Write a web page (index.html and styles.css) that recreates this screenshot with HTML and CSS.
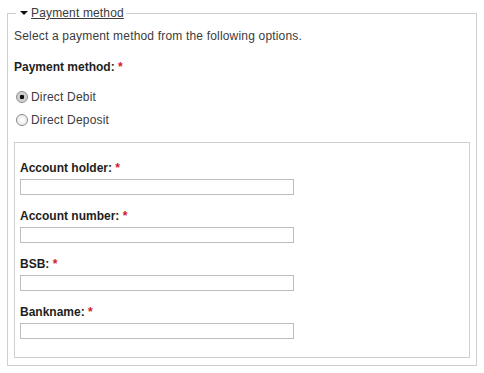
FILE: index.html
```html
<!DOCTYPE html>
<html lang="en">
<head>
<meta charset="UTF-8">
<meta name="viewport" content="width=device-width, initial-scale=1.0">
<title>Payment method</title>
<link rel="stylesheet" href="styles.css">
</head>
<body>

<form class="checkout">
    <fieldset class="pane">
        <legend><a href="#" class="pane-toggle"><span class="arrow"></span>Payment method</a></legend>
        <p class="pane-desc">Select a payment method from the following options.</p>

        <div class="form-item">
            <label class="field-label">Payment method: <span class="required">*</span></label>
            <div class="radios">
                <label class="radio"><input type="radio" name="method" value="debit" checked> Direct Debit</label>
                <label class="radio"><input type="radio" name="method" value="deposit"> Direct Deposit</label>
            </div>
        </div>

        <fieldset class="details">
            <div class="input-group">
                <label for="holder" class="field-label">Account holder: <span class="required">*</span></label>
                <input type="text" id="holder" name="holder">
            </div>
            <div class="input-group">
                <label for="number" class="field-label">Account number: <span class="required">*</span></label>
                <input type="text" id="number" name="number">
            </div>
            <div class="input-group">
                <label for="bsb" class="field-label">BSB: <span class="required">*</span></label>
                <input type="text" id="bsb" name="bsb">
            </div>
            <div class="input-group">
                <label for="bankname" class="field-label">Bankname: <span class="required">*</span></label>
                <input type="text" id="bankname" name="bankname">
            </div>
        </fieldset>
    </fieldset>
</form>

</body>
</html>
```

FILE: styles.css
```css
body {
    font-family: "Liberation Sans", Arial, sans-serif;
    font-size: 12px;
    line-height: 14px;
    color: #3b3b3b;
    background-color: #fff;
    margin: 0;
    padding: 6px 7px 0;
}

.checkout {
    margin: 0;
}

.pane {
    margin: 0;
    padding: 0 6px 7px;
    border: 1px solid #cfcfcf;
}

.pane legend {
    margin-left: 2px;
    padding: 0 2px;
    line-height: 14px;
}

.pane-toggle {
    color: #3b3b3b;
    text-decoration: underline;
    letter-spacing: 0.15px;
}

.arrow {
    display: inline-block;
    width: 0;
    height: 0;
    margin: 0 3px 2px 2px;
    border-left: 4px solid transparent;
    border-right: 4px solid transparent;
    border-top: 4px solid #111;
    vertical-align: middle;
}

.pane-desc {
    margin: 9px 0 0;
    letter-spacing: 0.18px;
}

.form-item {
    margin-top: 17px;
}

.field-label {
    display: block;
    font-weight: bold;
    color: #1e1e1e;
}

.required {
    color: #d3192c;
}

.radios {
    margin-top: 16px;
}

.radio {
    display: flex;
    align-items: center;
    height: 14px;
    margin-bottom: 9px;
    margin-left: 2px;
    letter-spacing: 0.2px;
}

.radio input {
    appearance: none;
    -webkit-appearance: none;
    width: 12px;
    height: 12px;
    margin: 0 3px 0 0;
    border: 1px solid #8a8a8a;
    border-radius: 50%;
    background: radial-gradient(circle, #fff 0%, #e6e6e6 100%);
    box-sizing: border-box;
}

.radio input:checked {
    background: radial-gradient(circle, #111 0, #111 2px, #c9c9c9 2.5px, #e2e2e2 100%);
}

.details {
    margin: 15px 0 0;
    padding: 18px 5px 18px;
    border: 1px solid #cfcfcf;
}

.input-group {
    margin-bottom: 14px;
}

.input-group:last-child {
    margin-bottom: 0;
}

.input-group .field-label {
    margin-bottom: 4px;
}

.input-group input[type="text"] {
    display: block;
    box-sizing: border-box;
    width: 274px;
    height: 16px;
    margin: 0;
    padding: 0 2px;
    border: 1px solid #bdbdbd;
    font: inherit;
}
```
